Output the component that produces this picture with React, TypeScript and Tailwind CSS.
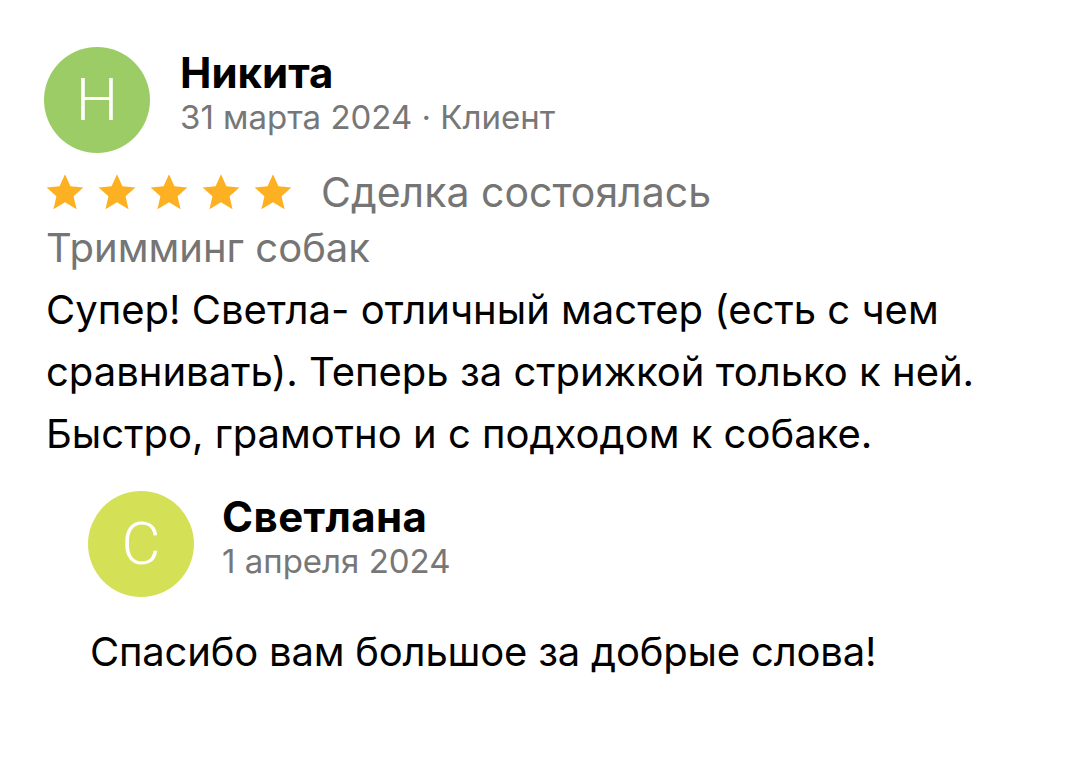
import React from "react";

const Star: React.FC = () => (
  <svg viewBox="0 0 24 24" className="w-[42px] h-[42px]">
    <path
      fill="#FDB022"
      d="M12 1.8l3.1 6.9 7.4.7-5.6 5 1.7 7.4L12 17.9l-6.6 3.9 1.7-7.4-5.6-5 7.4-.7z"
    />
  </svg>
);

const Avatar: React.FC<{ letter: string; color: string }> = ({ letter, color }) => (
  <div
    className={`w-[106px] h-[106px] rounded-full flex items-center justify-center text-white text-[60px] font-light leading-none shrink-0 font-[Roboto] ${color}`}
  >
    {letter}
  </div>
);

export default function App() {
  return (
    <div
      className="w-[1080px] h-[778px] bg-white pl-[44px] pt-[47px] text-black"
      style={{ fontFamily: "Inter, Roboto, sans-serif" }}
    >
      {/* review */}
      <div className="flex items-center">
        <Avatar letter="Н" color="bg-[#9ccc65]" />
        <div className="ml-[30px] -mt-[14px]">
          <div className="text-[42px] font-bold leading-[48px]">Никита</div>
          <div className="text-[33px] leading-[40px] text-[#777777]">
            31 марта 2024 · Клиент
          </div>
        </div>
      </div>

      <div className="flex items-center mt-[16px]">
        <div className="flex gap-[10px]">
          <Star />
          <Star />
          <Star />
          <Star />
          <Star />
        </div>
        <span className="ml-[27px] text-[41px] leading-[46px] text-[#757575]">
          Сделка состоялась
        </span>
      </div>

      <div className="mt-[10px] text-[40px] leading-[46px] text-[#757575] pl-[2px]">
        Тримминг собак
      </div>

      <p className="mt-[8px] text-[40px] leading-[62px] pl-[2px] w-[1000px]">
        Супер! Светла- отличный мастер (есть с чем
        <br />
        сравнивать). Теперь за стрижкой только к ней.
        <br />
        Быстро, грамотно и с подходом к собаке.
      </p>

      {/* reply */}
      <div className="pl-[44px] mt-[26px]">
        <div className="flex items-center">
          <Avatar letter="С" color="bg-[#d4e157]" />
          <div className="ml-[28px] -mt-[14px]">
            <div className="text-[42px] font-bold leading-[48px] tracking-[0.01em]">Светлана</div>
            <div className="text-[33px] leading-[40px] text-[#777777]">
              1 апреля 2024
            </div>
          </div>
        </div>
        <p className="mt-[24px] text-[40px] leading-[62px] tracking-[-0.005em] pl-[2px]">
          Спасибо вам большое за добрые слова!
        </p>
      </div>
    </div>
  );
}
